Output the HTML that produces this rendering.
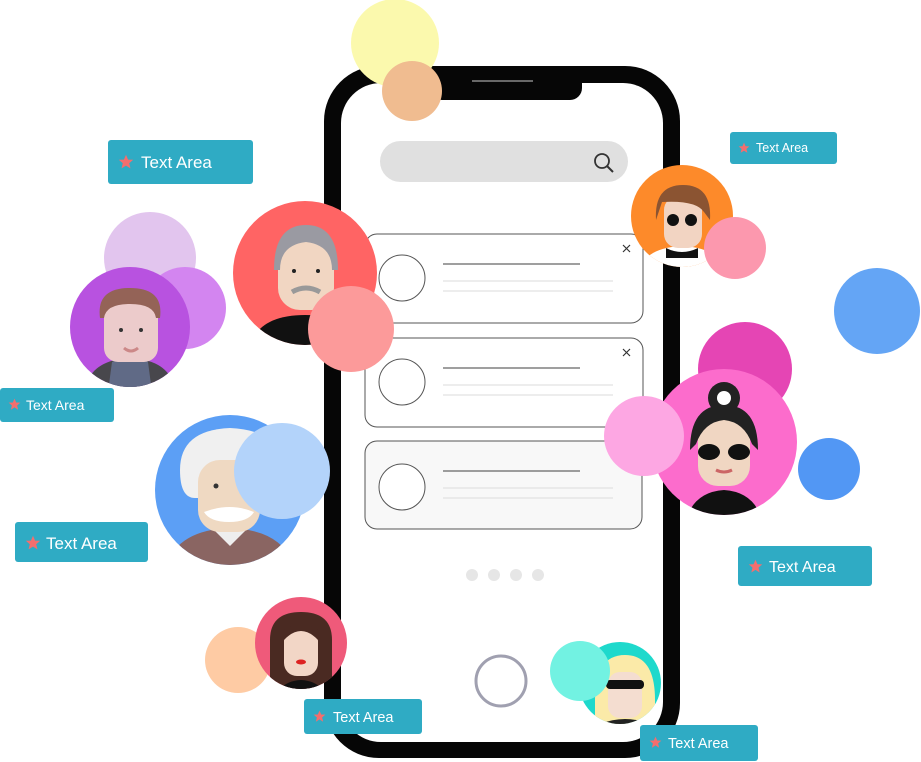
<!DOCTYPE html>
<html><head><meta charset="utf-8"><style>
html,body{margin:0;padding:0;background:#fff;width:921px;height:762px;overflow:hidden}
svg text{font-family:"Liberation Sans",sans-serif;fill:#fff}
</style></head><body>
<svg width="921" height="762" viewBox="0 0 921 762" xmlns="http://www.w3.org/2000/svg">
<defs>
<symbol id="star" viewBox="-10 -10 20 20"><polygon points="0,-9 2.6,-3 9,-2.8 4,1.5 5.6,8 0,4.5 -5.6,8 -4,1.5 -9,-2.8 -2.6,-3" fill="#f46e6e"/></symbol>
<clipPath id="cRed"><circle cx="305" cy="273" r="72"/></clipPath>
<clipPath id="cPur"><circle cx="130" cy="327" r="60"/></clipPath>
<clipPath id="cOr"><circle cx="682" cy="216" r="51"/></clipPath>
<clipPath id="cPk"><circle cx="724" cy="442" r="73"/></clipPath>
<clipPath id="cBl"><circle cx="230" cy="490" r="75"/></clipPath>
<clipPath id="cRo"><circle cx="301" cy="643" r="46"/></clipPath>
<clipPath id="cCy"><circle cx="620" cy="683" r="41"/></clipPath>
</defs>
<!-- phone -->
<rect x="324" y="66" width="356" height="692" rx="55" fill="#060606"/>
<rect x="341" y="83" width="322" height="659" rx="40" fill="#fff"/>
<path d="M430 66 H582 V88 a12 12 0 0 1 -12 12 H442 a12 12 0 0 1 -12 -12Z" fill="#060606"/>
<line x1="472" y1="81" x2="533" y2="81" stroke="#888" stroke-width="1.5"/>
<rect x="380" y="141" width="248" height="41" rx="20.5" fill="#e0e0e0"/>
<circle cx="602" cy="161" r="7" fill="none" stroke="#333" stroke-width="1.8"/>
<line x1="607" y1="166" x2="613" y2="172" stroke="#333" stroke-width="2"/>
<g stroke="#555" fill="#fff" stroke-width="1">
<rect x="365" y="234" width="278" height="89" rx="12"/>
<rect x="365" y="338" width="278" height="89" rx="12"/>
<rect x="365" y="441" width="277" height="88" rx="12" fill="#f8f8f8"/>
<circle cx="402" cy="278" r="23"/><circle cx="402" cy="382" r="23"/><circle cx="402" cy="487" r="23"/>
</g>
<g stroke-width="1.2">
<line x1="443" y1="264" x2="580" y2="264" stroke="#666"/><line x1="443" y1="281" x2="613" y2="281" stroke="#e2e2e2"/><line x1="443" y1="291" x2="613" y2="291" stroke="#e2e2e2"/>
<line x1="443" y1="368" x2="580" y2="368" stroke="#666"/><line x1="443" y1="385" x2="613" y2="385" stroke="#e2e2e2"/><line x1="443" y1="395" x2="613" y2="395" stroke="#e2e2e2"/>
<line x1="443" y1="471" x2="580" y2="471" stroke="#666"/><line x1="443" y1="488" x2="613" y2="488" stroke="#e2e2e2"/><line x1="443" y1="498" x2="613" y2="498" stroke="#e2e2e2"/>
</g>
<g stroke="#333" stroke-width="1.2"><path d="M623 245l7 7M630 245l-7 7M623 349l7 7M630 349l-7 7"/></g>
<g fill="#e6e6e6"><circle cx="472" cy="575" r="6"/><circle cx="494" cy="575" r="6"/><circle cx="516" cy="575" r="6"/><circle cx="538" cy="575" r="6"/></g>
<circle cx="501" cy="681" r="25" fill="none" stroke="#a0a0b0" stroke-width="3"/>

<circle cx="395" cy="43" r="44" fill="#fbf9ad"/>
<circle cx="412" cy="91" r="30" fill="#f0bc90"/>

<circle cx="305" cy="273" r="72" fill="#ff6464"/>
<g clip-path="url(#cRed)">
<path d="M250 345 q10 -30 55 -30 q45 0 55 30z" fill="#111"/>
<rect x="278" y="240" width="56" height="70" rx="22" fill="#f1d6c2"/>
<path d="M274 270 q0 -45 32 -45 q32 0 32 45 l-6 0 q0 -25 -26 -28 q-26 3 -26 28z" fill="#9a9aa2"/>
<path d="M292 292 q14 -8 28 0" stroke="#999" stroke-width="5" fill="none"/>
<circle cx="294" cy="271" r="2" fill="#222"/><circle cx="318" cy="271" r="2" fill="#222"/>
</g>
<circle cx="351" cy="329" r="43" fill="#fc9a9a"/>

<circle cx="150" cy="258" r="46" fill="#e2c5ee"/>
<circle cx="185" cy="308" r="41" fill="#d385f0"/>
<circle cx="130" cy="327" r="60" fill="#b852e0"/>
<g clip-path="url(#cPur)">
<path d="M85 390 q5 -30 45 -32 q40 2 45 32z" fill="#48474c"/>
<path d="M112 362 q18 -8 36 0 l4 30 h-44z" fill="#606a86"/>
<rect x="104" y="300" width="54" height="62" rx="14" fill="#eccbcb"/>
<path d="M100 318 q-4 -30 30 -30 q34 0 30 30 l-4 0 q-2 -14 -26 -14 q-24 0 -26 14z" fill="#946357"/>
<circle cx="121" cy="330" r="2" fill="#333"/><circle cx="141" cy="330" r="2" fill="#333"/>
<path d="M124 348 q7 6 14 0" stroke="#c88" stroke-width="3" fill="none"/>
</g>

<circle cx="682" cy="216" r="51" fill="#fd8a2a"/>
<g clip-path="url(#cOr)">
<path d="M640 270 q5 -22 42 -24 q37 2 42 24z" fill="#fff"/>
<path d="M666 248 q16 8 32 0 v10 h-32z" fill="#111"/>
<rect x="664" y="196" width="38" height="52" rx="14" fill="#f2d4c2"/>
<path d="M656 220 q-2 -35 27 -35 q29 0 27 35 l-6 -8 q-8 -12 -42 -10z" fill="#8b5432"/>
<circle cx="673" cy="220" r="6" fill="#111"/><circle cx="691" cy="220" r="6" fill="#111"/>
</g>
<circle cx="735" cy="248" r="31" fill="#fc98ae"/>

<circle cx="877" cy="311" r="43" fill="#64a5f5"/>

<circle cx="745" cy="369" r="47" fill="#e545b4"/>
<circle cx="724" cy="442" r="73" fill="#fc6ccc"/>
<g clip-path="url(#cPk)">
<path d="M686 520 q8 -28 38 -30 q30 2 38 30z" fill="#111"/>
<rect x="698" y="416" width="52" height="70" rx="20" fill="#f0d6c2"/>
<circle cx="724" cy="398" r="16" fill="#222"/>
<path d="M690 450 q0 -45 34 -45 q34 0 34 45 l-6 -6 q-8 -22 -28 -24 q-20 2 -28 24z" fill="#222"/>
<circle cx="724" cy="398" r="7" fill="#fff"/>
<ellipse cx="709" cy="452" rx="11" ry="8" fill="#111"/><ellipse cx="739" cy="452" rx="11" ry="8" fill="#111"/>
<path d="M716 470 q8 4 16 0" stroke="#c66" stroke-width="3" fill="none"/>
</g>
<circle cx="644" cy="436" r="40" fill="#fda7e3"/>
<circle cx="829" cy="469" r="31" fill="#5297f4"/>

<circle cx="230" cy="490" r="75" fill="#5c9ff5"/>
<g clip-path="url(#cBl)">
<path d="M165 570 q10 -40 65 -42 q55 2 65 42z" fill="#8a6562"/>
<path d="M212 528 h36 l-18 18z" fill="#eee"/>
<path d="M180 470 q0 -40 50 -42 q50 2 55 40 q-5 30 -20 30 l-70 0 q-15 0 -15 -28z" fill="#f0f0f0"/>
<rect x="198" y="460" width="62" height="72" rx="22" fill="#efd9c2"/>
<path d="M204 512 q26 -10 50 0 q-6 10 -25 10 q-19 0 -25 -10z" fill="#fff"/>
<circle cx="216" cy="486" r="2.5" fill="#333"/>
</g>
<circle cx="282" cy="471" r="48" fill="#b3d3fa"/>

<circle cx="238" cy="660" r="33" fill="#fecba4"/>
<circle cx="301" cy="643" r="46" fill="#ef5a7a"/>
<g clip-path="url(#cRo)">
<path d="M270 640 q0 -28 31 -28 q31 0 31 28 v50 h-62z" fill="#4a2a22"/>
<path d="M278 695 q4 -14 23 -15 q19 1 23 15z" fill="#111"/>
<rect x="284" y="628" width="34" height="48" rx="13" fill="#f2d6c6"/>
<path d="M284 640 q17 -18 34 0 v-10 q-17 -12 -34 0z" fill="#4a2a22"/>
<ellipse cx="301" cy="662" rx="5" ry="2.5" fill="#d22"/>
</g>

<circle cx="620" cy="683" r="41" fill="#1ed9cc"/>
<g clip-path="url(#cCy)">
<path d="M595 700 q0 -45 30 -45 q30 0 30 45 v30 h-60z" fill="#fbeaa8"/>
<rect x="608" y="672" width="34" height="46" rx="12" fill="#f4ddd0"/>
<rect x="606" y="680" width="38" height="9" rx="4" fill="#111"/>
<path d="M600 724 q25 -10 50 0v10h-50z" fill="#222"/>
</g>
<circle cx="580" cy="671" r="30" fill="#72f2e2"/>

<g fill="#2fabc4">
<rect x="108" y="140" width="145" height="44" rx="3"/>
<rect x="730" y="132" width="107" height="32" rx="3"/>
<rect x="0" y="388" width="114" height="34" rx="3"/>
<rect x="15" y="522" width="133" height="40" rx="3"/>
<rect x="738" y="546" width="134" height="40" rx="3"/>
<rect x="304" y="699" width="118" height="35" rx="3"/>
<rect x="640" y="725" width="118" height="36" rx="3"/>
</g>
<use href="#star" x="118" y="154" width="16" height="16"/><text x="141" y="168" font-size="17">Text Area</text>
<use href="#star" x="738" y="142" width="12" height="12"/><text x="756" y="152" font-size="12.5">Text Area</text>
<use href="#star" x="8" y="398" width="13" height="13"/><text x="26" y="410" font-size="14">Text Area</text>
<use href="#star" x="25" y="535" width="16" height="16"/><text x="46" y="549" font-size="17">Text Area</text>
<use href="#star" x="748" y="559" width="15" height="15"/><text x="769" y="572" font-size="16">Text Area</text>
<use href="#star" x="313" y="710" width="13" height="13"/><text x="333" y="722" font-size="14.5">Text Area</text>
<use href="#star" x="649" y="736" width="13" height="13"/><text x="668" y="748" font-size="14.5">Text Area</text>
</svg>
</body></html>
